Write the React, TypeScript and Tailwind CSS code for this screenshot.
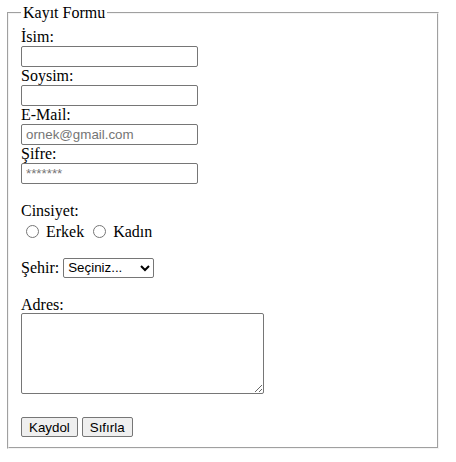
export default function App() {
  const inputCls =
    "block w-[177px] h-[21px] border border-[#767676] rounded-[2px] bg-white pl-[4px] pr-[2px] py-[1px] text-[13.33px] font-['Liberation_Sans',Arial,sans-serif] placeholder:text-[#757575]";
  const btnCls =
    "h-[20px] px-[7px] border border-[#767676] rounded-[2px] bg-[#efefef] text-[13.33px] font-['Liberation_Sans',Arial,sans-serif]";

  return (
    <div className="min-h-[462px] bg-white pl-[7px] pt-[4px] text-[16px] text-black font-['Liberation_Serif','Times_New_Roman',serif]">
      <fieldset className="w-[432px] h-[445px] border-2 [border-style:groove] border-[#f4f4f4] px-[12px] pt-[5.6px] pb-[10px]">
        <legend className="px-[2px] leading-[18px]">Kayıt Formu</legend>
        <form className="flex flex-col items-start" onSubmit={(e) => e.preventDefault()}>
          <label className="h-[18px] leading-[18px]">İsim:</label>
          <input type="text" className={inputCls} />
          <label className="h-[18px] leading-[18px]">Soysim:</label>
          <input type="text" className={inputCls} />
          <label className="h-[18px] leading-[18px]">E-Mail:</label>
          <input type="email" placeholder="ornek@gmail.com" className={inputCls} />
          <label className="h-[18px] leading-[18px]">Şifre:</label>
          <input type="password" placeholder="*******" className={inputCls} />

          <div className="h-[18px]" />
          <span className="h-[18px] leading-[18px]">Cinsiyet:</span>
          <div className="h-[20px] pt-[2px] leading-[18px] whitespace-pre">
            <input type="radio" name="cinsiyet" className="m-[3px_3px_0_5px] align-[-1px]" />
            {" Erkek "}
            <input type="radio" name="cinsiyet" className="m-[3px_3px_0_5px] align-[-1px]" />
            {" Kadın"}
          </div>

          <div className="h-[18px]" />
          <div className="flex items-center h-[20px]">
            <span className="leading-[18px]">Şehir:</span>
            <select className="ml-[4px] w-[91px] h-[20px] border border-[#767676] rounded-[2px] bg-white text-[13.33px] font-['Liberation_Sans',Arial,sans-serif]">
              <option>Seçiniz...</option>
              <option>İstanbul</option>
              <option>Ankara</option>
              <option>İzmir</option>
            </select>
          </div>

          <div className="h-[18px]" />
          <label className="h-[17px] leading-[18px]">Adres:</label>
          <textarea className="block w-[243px] h-[81px] border border-[#767676] rounded-[2px] bg-white" />

          <div className="h-[23px]" />
          <div className="flex gap-[4px]">
            <button type="submit" className={btnCls}>
              Kaydol
            </button>
            <button type="reset" className={btnCls}>
              Sıfırla
            </button>
          </div>
        </form>
      </fieldset>
    </div>
  );
}
